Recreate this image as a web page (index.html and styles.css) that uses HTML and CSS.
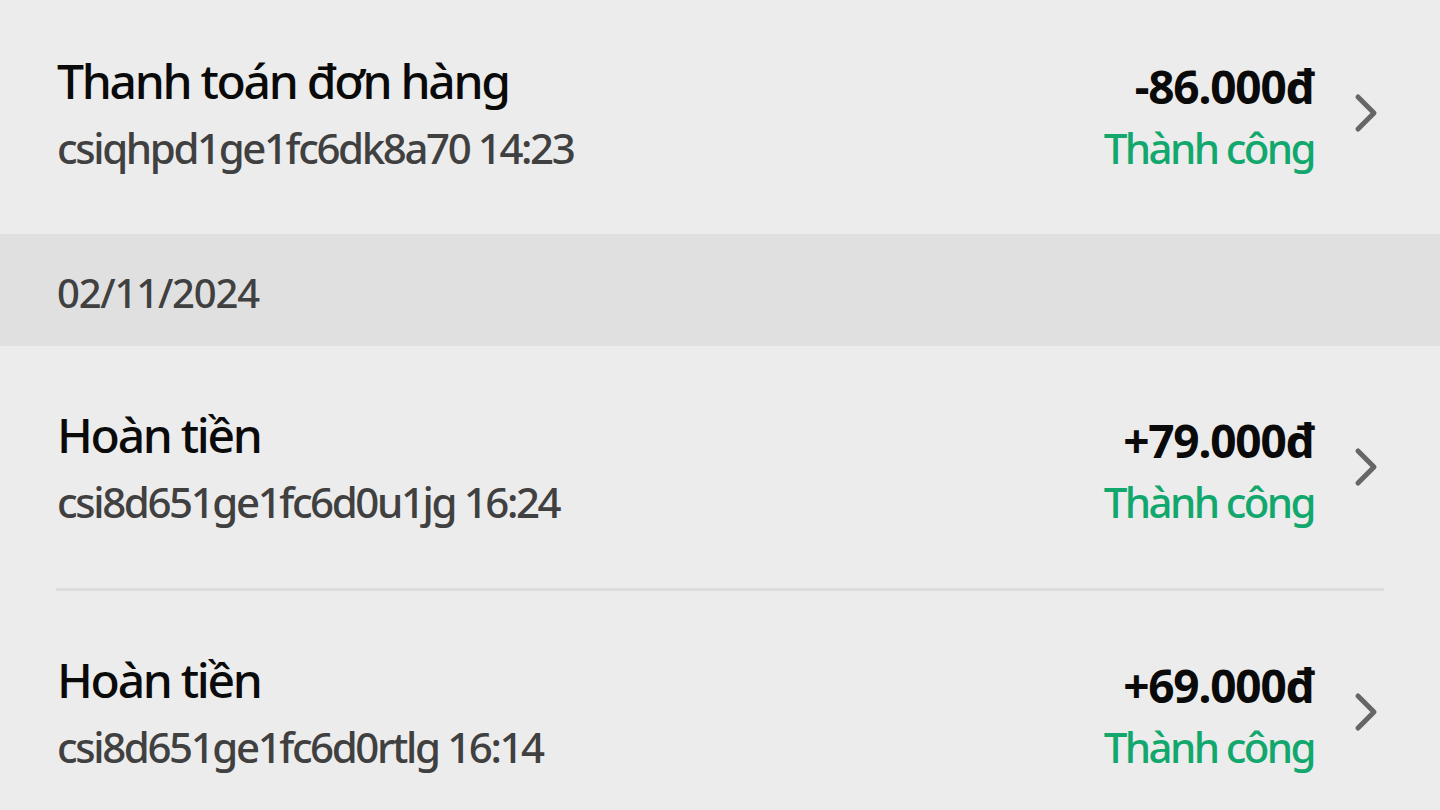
FILE: index.html
```html
<!DOCTYPE html>
<html lang="vi">
<head>
    <meta charset="UTF-8">
    <meta name="viewport" content="width=device-width, initial-scale=1.0">
    <title>Lịch sử giao dịch</title>
    <link rel="stylesheet" href="styles.css">
</head>
<body>
    <div class="history">
        <!-- Giao dịch cuối của ngày trước -->
        <div class="txn">
            <div class="txn-info">
                <div class="txn-title">Thanh toán đơn hàng</div>
                <div class="txn-sub">csiqhpd1ge1fc6dk8a70 14:23</div>
            </div>
            <div class="txn-side">
                <div class="txn-amount">-86.000đ</div>
                <div class="txn-status">Thành công</div>
            </div>
            <svg class="chevron" viewBox="0 0 24 40"><path d="M4 4 L20 20 L4 36"/></svg>
        </div>

        <div class="day-head">02/11/2024</div>

        <div class="txn">
            <div class="txn-info">
                <div class="txn-title">Hoàn tiền</div>
                <div class="txn-sub">csi8d651ge1fc6d0u1jg 16:24</div>
            </div>
            <div class="txn-side">
                <div class="txn-amount">+79.000đ</div>
                <div class="txn-status">Thành công</div>
            </div>
            <svg class="chevron" viewBox="0 0 24 40"><path d="M4 4 L20 20 L4 36"/></svg>
        </div>
        <div class="divider"></div>
        <div class="txn">
            <div class="txn-info">
                <div class="txn-title">Hoàn tiền</div>
                <div class="txn-sub">csi8d651ge1fc6d0rtlg 16:14</div>
            </div>
            <div class="txn-side">
                <div class="txn-amount">+69.000đ</div>
                <div class="txn-status">Thành công</div>
            </div>
            <svg class="chevron" viewBox="0 0 24 40"><path d="M4 4 L20 20 L4 36"/></svg>
        </div>
    </div>
</body>
</html>
```

FILE: styles.css
```css
body {
    margin: 0;
    background: #ececec;
    font-family: "Noto Sans", "Open Sans", sans-serif;
    overflow: hidden;
}
.history {
    margin-top: -8px;
}
.txn {
    display: flex;
    align-items: center;
    height: 242px;
    padding: 0 62px 0 57px;
    box-sizing: border-box;
}
.txn-info {
    flex: 1;
}
.txn-title {
    font-size: 48px;
    font-weight: 500;
    letter-spacing: -2.3px;
    color: #0a0a0a;
    line-height: 64px;
}
.txn-sub {
    font-size: 42px;
    font-weight: 500;
    letter-spacing: -2.4px;
    color: #404040;
    line-height: 64px;
    margin-top: 3px;
    margin-bottom: -3px;
}
.txn-side {
    text-align: right;
}
.txn-amount {
    font-size: 46px;
    font-weight: bold;
    letter-spacing: -1.2px;
    color: #0a0a0a;
    line-height: 64px;
    margin-top: 8px;
}
.txn-status {
    font-size: 42px;
    font-weight: 500;
    letter-spacing: -2.6px;
    color: #12a86d;
    line-height: 64px;
    margin-top: -2px;
}
.chevron {
    width: 24px;
    height: 40px;
    margin-left: 40px;
    fill: none;
    stroke: #666;
    stroke-width: 5;
    stroke-linecap: round;
    stroke-linejoin: round;
}
.day-head {
    height: 112px;
    background: #e0e0e0;
    display: flex;
    align-items: center;
    box-sizing: border-box;
    padding: 5px 0 0 57px;
    font-size: 40px;
    font-weight: 500;
    letter-spacing: -1.2px;
    color: #404040;
}
.divider {
    height: 3px;
    background: #dcdedc;
    margin: 0 56px;
}
```
